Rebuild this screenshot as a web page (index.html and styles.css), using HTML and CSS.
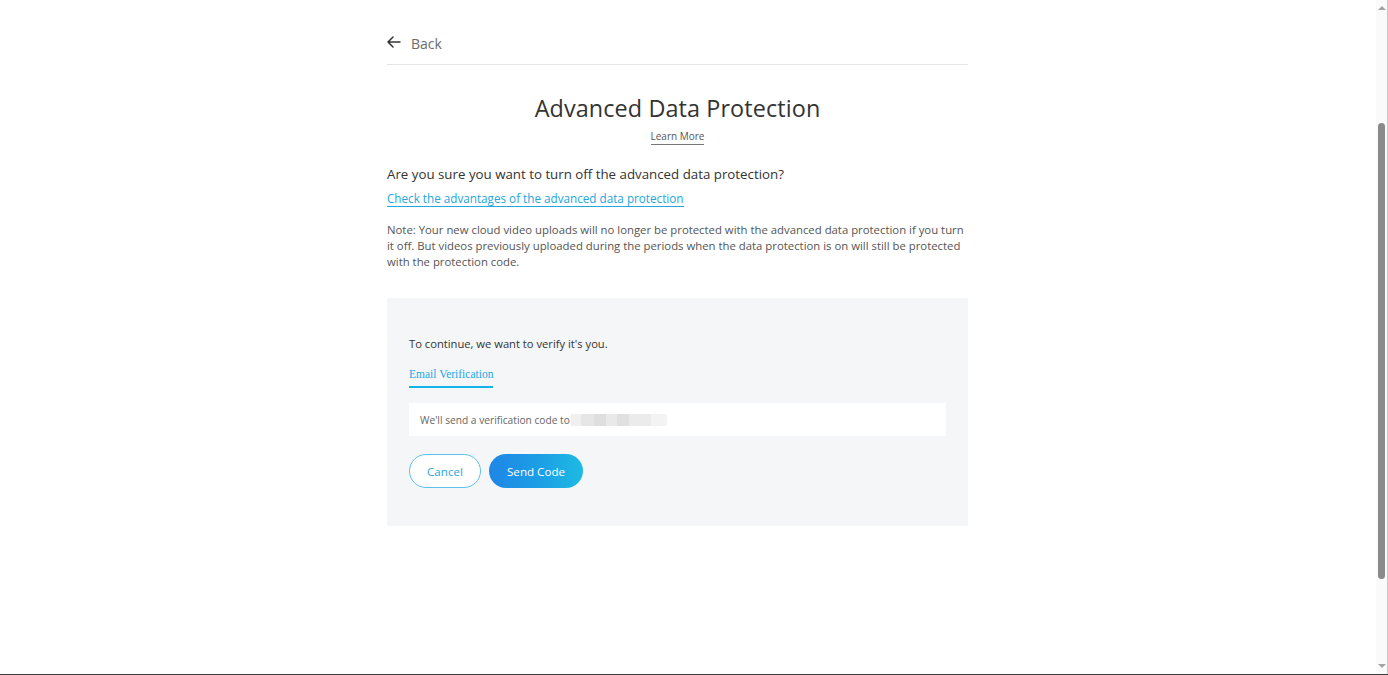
FILE: index.html
```html
<!DOCTYPE html>
<html lang="en">
<head>
<meta charset="utf-8">
<title>Advanced Data Protection</title>
<link rel="stylesheet" href="styles.css">
</head>
<body>
<div class="window">
  <main class="page">
    <div class="content">
      <a class="back" href="#">
        <svg class="back-icon" width="14" height="12" viewBox="0 0 14 12" aria-hidden="true">
          <path d="M6 1 L1 6 L6 11 M1 6 H13" fill="none" stroke="#333" stroke-width="1.5" stroke-linecap="round" stroke-linejoin="round"/>
        </svg>
        <span>Back</span>
      </a>
      <div class="divider"></div>

      <h1 class="title">Advanced Data Protection</h1>
      <div class="learn-wrap"><a class="learn" href="#">Learn More</a></div>

      <p class="question">Are you sure you want to turn off the advanced data protection?</p>
      <a class="adv-link" href="#">Check the advantages of the advanced data protection</a>
      <p class="note">Note: Your new cloud video uploads will no longer be protected with the advanced data protection if you turn it off. But videos previously uploaded during the periods when the data protection is on will still be protected with the protection code.</p>

      <section class="verify">
        <p class="verify-intro">To continue, we want to verify it's you.</p>
        <div class="tabs"><span class="tab">Email Verification</span></div>
        <div class="send-box">
          <span>We'll send a verification code to</span><span class="masked"><i></i><i></i><i></i><i></i><i></i><i></i><i></i></span>
        </div>
        <div class="actions">
          <button class="btn btn-cancel">Cancel</button>
          <button class="btn btn-send">Send Code</button>
        </div>
      </section>
    </div>
  </main>
  <div class="scrollbar">
    <div class="sb-arrow sb-up"></div>
    <div class="sb-track"><div class="sb-thumb"></div></div>
    <div class="sb-arrow sb-down"></div>
  </div>
</div>
</body>
</html>
```

FILE: styles.css
```css
* { box-sizing: border-box; }
html, body { margin: 0; padding: 0; background: #fff; }
body {
  font-family: "Open Sans", "Liberation Sans", sans-serif;
  color: #333;
}
.window {
  display: flex;
  height: 675px;
  border-bottom: 1px solid #3c3c3c;
  overflow: hidden;
}
.page {
  flex: 1;
  min-width: 0;
}
.content {
  width: 581px;
  margin-left: 387px;
  padding-top: 30px;
}
.back {
  display: flex;
  align-items: center;
  gap: 10px;
  text-decoration: none;
  color: #6b6b6b;
  font-size: 14px;
  height: 26px;
}
.back-icon { display: block; margin-top: -2px; }
.divider {
  height: 1px;
  background: #e4e4e4;
  margin-top: 8px;
}
.title {
  margin: 27px 0 0;
  text-align: center;
  font-size: 23.4px;
  font-weight: 400;
  color: #333;
  line-height: 32px;
  letter-spacing: 0.1px;
}
.learn-wrap { text-align: center; margin-top: 2px; line-height: 16px; }
.learn {
  font-size: 10px;
  color: #555;
  text-decoration: none;
  border-bottom: 1px solid #777;
  padding-bottom: 1px;
}
.question {
  margin: 19px 0 0;
  font-size: 13.3px;
  line-height: 22px;
  color: #333;
}
.adv-link {
  display: inline-block;
  margin-top: 5px;
  font-size: 11.7px;
  line-height: 16px;
  color: #22a7e0;
  text-decoration: none;
  border-bottom: 1px solid #22a7e0;
}
.note {
  margin: 14px 0 0;
  font-size: 11.35px;
  line-height: 16px;
  color: #555;
}
.verify {
  margin-top: 28px;
  background: #f5f6f8;
  padding: 38px 22px 38px;
}
.verify-intro {
  margin: 0;
  font-size: 11.2px;
  line-height: 16px;
  color: #333;
}
.tabs {
  margin-top: 15px;
  display: flex;
}
.tab {
  font-family: "Liberation Serif", serif;
  font-size: 11.5px;
  color: #1ba8e2;
  line-height: 15px;
  padding-bottom: 4px;
  border-bottom: 2px solid #14b2ea;
}
.send-box {
  margin-top: 15px;
  background: #fff;
  height: 33px;
  display: flex;
  align-items: center;
  padding-left: 11px;
  font-size: 10.2px;
  color: #666;
}
.masked {
  display: inline-flex;
  height: 12px;
  margin-left: 1px;
  filter: blur(0.6px);
}
.masked i { display: block; height: 12px; width: 15px; }
.masked i:nth-child(1) { background: #f0f0f0; width: 10px; }
.masked i:nth-child(2) { background: #e6e6e6; width: 13px; }
.masked i:nth-child(3) { background: #dedede; width: 12px; }
.masked i:nth-child(4) { background: #e9e9e9; width: 11px; }
.masked i:nth-child(5) { background: #e0e0e0; width: 12px; }
.masked i:nth-child(6) { background: #ebebeb; width: 22px; }
.masked i:nth-child(7) { background: #f3f3f3; width: 16px; }
.actions {
  margin-top: 18px;
  display: flex;
  gap: 8px;
}
.btn {
  height: 34px;
  border-radius: 17px;
  font-family: inherit;
  font-size: 11.6px;
  cursor: pointer;
  padding: 0;
}
.btn-cancel {
  width: 72px;
  background: #fff;
  border: 1px solid #5cc2ec;
  color: #2aa5df;
}
.btn-send {
  width: 94px;
  border: none;
  color: #fff;
  background: linear-gradient(90deg, #1f86e6 0%, #1c9fe6 55%, #1dbbe2 100%);
}
.scrollbar {
  width: 12px;
  flex: none;
  display: flex;
  flex-direction: column;
  background: #fafafa;
  border-right: 1px solid #c8c8c8;
}
.sb-arrow {
  height: 16px;
  display: flex;
  justify-content: center;
  align-items: center;
}
.sb-up::before {
  content: "";
  border-left: 4px solid transparent;
  border-right: 4px solid transparent;
  border-bottom: 4px solid #a3a3a3;
}
.sb-down::before {
  content: "";
  border-left: 4px solid transparent;
  border-right: 4px solid transparent;
  border-top: 4px solid #a3a3a3;
}
.sb-track {
  flex: 1;
  padding: 107px 2px 0 2px;
}
.sb-thumb {
  height: 456px;
  background: #8a8a8a;
  border-radius: 4px;
}
```
